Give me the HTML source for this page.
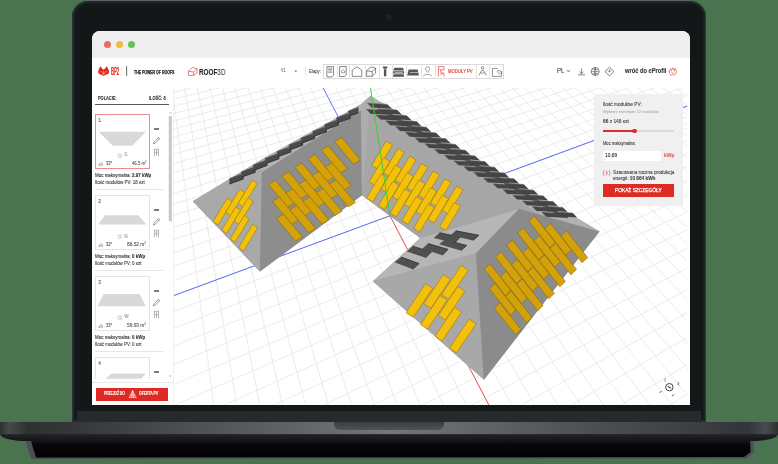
<!DOCTYPE html>
<html><head><meta charset="utf-8">
<style>
*{margin:0;padding:0;box-sizing:border-box}
html,body{width:778px;height:464px;overflow:hidden;background:#4a734f;font-family:"Liberation Sans",sans-serif}
.a{position:absolute}
#shadow{left:0;top:0;width:778px;height:464px}
#base{left:0;top:421.8px;width:778px;height:19.2px;border-radius:0 0 26px 26px/0 0 7px 7px;
 background:linear-gradient(to bottom,rgba(0,0,0,0) 0,rgba(0,0,0,0) 64%,#222326 66%,#141517 100%),
 linear-gradient(to right,#2e2f31 0,#48494c 1.2%,#2f3032 3.5%,#36373a 10%,#4f5053 25%,#626366 38%,#747679 50%,#626366 62%,#4f5053 75%,#3d3e41 90%,#333437 96%,#4a4b4e 98.5%,#2e2f31 100%)}
#notch{left:333.7px;top:421.8px;width:110.3px;height:8.6px;border-radius:0 0 6px 6px;background:linear-gradient(to bottom,#3a3c3f,#505256)}
#lid{left:71.6px;top:0.8px;width:634px;height:421px;border-radius:16px 16px 0 0;background:#131718;
 box-shadow:inset 0 0 0 1.2px #2f3439, inset 0 0 0 3px #1b1f22}
#chin{left:77px;top:410.7px;width:624px;height:11.1px;background:#262a2d}
#screen{left:92px;top:30.5px;width:598px;height:374.2px;border-radius:8px 8px 0 0;background:#fff;overflow:hidden}
#tbar{left:0;top:0;width:598px;height:27.5px;background:#efefef}
.dot{position:absolute;top:10.4px;width:7px;height:7px;border-radius:50%}
.t{position:absolute;white-space:nowrap;line-height:1}
</style></head><body>
<svg id="shadow" class="a" width="778" height="464" viewBox="0 0 778 464">
 <defs>
  <filter id="sb" x="-5%" y="-50%" width="110%" height="200%"><feGaussianBlur stdDeviation="0.6"/></filter>
  <linearGradient id="sg" x1="0" y1="0" x2="0" y2="1"><stop offset="0" stop-color="#1c1d21"/><stop offset="0.35" stop-color="#08080a"/><stop offset="1" stop-color="#000"/></linearGradient>
 </defs>
 <polygon points="25,440 753,440 754,452 747,458.5 31,459" fill="#4e4d5a" filter="url(#sb)"/>
 <polygon points="30,438 750,438 750.5,452 744,457 36,457.5" fill="url(#sg)"/>
</svg>
<div id="base" class="a"></div>
<div id="notch" class="a"></div>
<div id="lid" class="a"></div>
<div class="a" style="left:88px;top:0;width:602px;height:1px;background:#5e6068"></div>
<div id="chin" class="a"></div>
<div id="camdot" class="a" style="left:387px;top:15.4px;width:4px;height:4px;border-radius:50%;background:#1c2023;box-shadow:0 0 0 0.6px #262a2e"></div>
<div class="a" style="left:86px;top:1px;width:606px;height:3px;background:linear-gradient(#2a2f33,#141819)"></div>
<div id="screen" class="a">
  <div id="tbar" class="a">
    <div class="dot" style="left:11.8px;background:#ec6a5e"></div>
    <div class="dot" style="left:23.8px;background:#f2bb45"></div>
    <div class="dot" style="left:35.8px;background:#61c454"></div>
  </div>
</div>

<svg width="778" height="464" viewBox="0 0 778 464" style="position:absolute;left:0;top:0">
<defs><clipPath id="vp"><rect x="173.7" y="88" width="513.5" height="316.7"/></clipPath></defs>
<g clip-path="url(#vp)">
<rect x="173.7" y="88" width="516.3" height="316.7" fill="#fff"/>
<g stroke="#e6e6e6" stroke-width="0.8"><line x1="-89.9" y1="-28.6" x2="1573.0" y2="-2153.7"/><line x1="-461.5" y1="107.3" x2="635.4" y2="-90.6"/><line x1="-80.0" y1="-30.0" x2="1565.2" y2="-2224.2"/><line x1="-471.7" y1="114.4" x2="640.0" y2="-88.7"/><line x1="-70.2" y1="-31.4" x2="1556.8" y2="-2300.2"/><line x1="-482.3" y1="121.7" x2="644.6" y2="-86.8"/><line x1="-60.6" y1="-32.8" x2="1547.7" y2="-2382.5"/><line x1="-493.2" y1="129.4" x2="649.3" y2="-84.9"/><line x1="-51.0" y1="-34.2" x2="1537.8" y2="-2471.8"/><line x1="-504.6" y1="137.3" x2="654.2" y2="-83.0"/><line x1="-41.5" y1="-35.5" x2="1527.0" y2="-2569.1"/><line x1="-516.4" y1="145.5" x2="659.1" y2="-81.0"/><line x1="-32.1" y1="-36.9" x2="1515.3" y2="-2675.5"/><line x1="-528.6" y1="154.0" x2="664.1" y2="-79.0"/><line x1="-22.9" y1="-38.2" x2="1502.3" y2="-2792.4"/><line x1="-541.4" y1="162.9" x2="669.1" y2="-76.9"/><line x1="-13.7" y1="-39.5" x2="1488.1" y2="-2921.4"/><line x1="-554.6" y1="172.1" x2="674.3" y2="-74.8"/><line x1="-4.6" y1="-40.8" x2="1472.3" y2="-3064.4"/><line x1="-568.4" y1="181.7" x2="679.6" y2="-72.7"/><line x1="4.4" y1="-42.1" x2="1454.6" y2="-3223.9"/><line x1="-582.8" y1="191.7" x2="685.0" y2="-70.5"/><line x1="13.3" y1="-43.4" x2="1434.8" y2="-3402.9"/><line x1="-597.7" y1="202.1" x2="690.5" y2="-68.3"/><line x1="22.1" y1="-44.7" x2="1412.4" y2="-3605.2"/><line x1="-613.4" y1="213.0" x2="696.1" y2="-66.1"/><line x1="30.9" y1="-45.9" x2="1387.0" y2="-3835.8"/><line x1="-629.7" y1="224.4" x2="701.8" y2="-63.7"/><line x1="39.5" y1="-47.2" x2="1357.6" y2="-4100.8"/><line x1="-646.7" y1="236.2" x2="707.6" y2="-61.4"/><line x1="48.1" y1="-48.4" x2="1323.6" y2="-4408.8"/><line x1="-664.6" y1="248.7" x2="713.5" y2="-59.0"/><line x1="56.5" y1="-49.6" x2="1283.5" y2="-4771.0"/><line x1="-683.3" y1="261.7" x2="719.6" y2="-56.5"/><line x1="64.9" y1="-50.8" x2="1235.7" y2="-5203.3"/><line x1="-702.9" y1="275.3" x2="725.8" y2="-54.0"/><line x1="73.3" y1="-52.0" x2="1177.7" y2="-5727.9"/><line x1="-723.5" y1="289.7" x2="732.1" y2="-51.5"/><line x1="81.5" y1="-53.2" x2="1105.8" y2="-6378.2"/><line x1="-745.1" y1="304.7" x2="738.6" y2="-48.9"/><line x1="89.6" y1="-54.4" x2="1014.4" y2="-7205.4"/><line x1="-767.9" y1="320.6" x2="745.2" y2="-46.2"/><line x1="97.7" y1="-55.5" x2="894.1" y2="-8293.0"/><line x1="-791.9" y1="337.3" x2="751.9" y2="-43.5"/><line x1="105.7" y1="-56.7" x2="728.9" y2="-9787.0"/><line x1="-817.3" y1="355.0" x2="758.8" y2="-40.7"/><line x1="113.6" y1="-57.8" x2="487.8" y2="-11967.6"/><line x1="-844.1" y1="373.6" x2="765.8" y2="-37.9"/><line x1="121.5" y1="-58.9" x2="102.8" y2="-15449.3"/><line x1="-872.4" y1="393.4" x2="773.0" y2="-35.0"/><line x1="129.3" y1="-60.0" x2="-609.6" y2="-21891.4"/><line x1="-902.5" y1="414.3" x2="780.3" y2="-32.0"/><line x1="137.0" y1="-61.2" x2="-2375.7" y2="-37862.6"/><line x1="-934.5" y1="436.5" x2="787.8" y2="-29.0"/><line x1="144.6" y1="-62.2" x2="-14173.1" y2="-144551.1"/><line x1="-968.5" y1="460.2" x2="795.5" y2="-25.9"/><line x1="152.1" y1="-63.3" x2="10447.4" y2="78100.9"/><line x1="-1004.8" y1="485.5" x2="803.4" y2="-22.7"/><line x1="159.6" y1="-64.4" x2="5186.7" y2="30526.4"/><line x1="-1043.6" y1="512.5" x2="811.4" y2="-19.4"/><line x1="167.1" y1="-65.5" x2="3899.5" y2="18885.8"/><line x1="-1085.1" y1="541.4" x2="819.7" y2="-16.1"/><line x1="174.4" y1="-66.5" x2="3318.0" y2="13627.3"/><line x1="-1129.8" y1="572.5" x2="828.1" y2="-12.7"/><line x1="181.7" y1="-67.6" x2="2986.7" y2="10631.5"/><line x1="-1177.9" y1="606.0" x2="836.8" y2="-9.2"/><line x1="188.9" y1="-68.6" x2="2772.8" y2="8696.6"/><line x1="-1229.8" y1="642.1" x2="845.6" y2="-5.6"/><line x1="196.1" y1="-69.6" x2="2623.2" y2="7343.8"/><line x1="-1286.0" y1="681.3" x2="854.7" y2="-1.9"/><line x1="203.2" y1="-70.7" x2="2512.7" y2="6344.8"/><line x1="-1347.1" y1="723.8" x2="864.1" y2="1.8"/><line x1="210.2" y1="-71.7" x2="2427.8" y2="5576.8"/><line x1="-1413.8" y1="770.2" x2="873.6" y2="5.7"/><line x1="217.1" y1="-72.7" x2="2360.5" y2="4968.0"/><line x1="-1486.8" y1="821.0" x2="883.4" y2="9.6"/><line x1="224.1" y1="-73.7" x2="2305.8" y2="4473.6"/><line x1="-1567.1" y1="876.9" x2="893.5" y2="13.7"/><line x1="230.9" y1="-74.6" x2="2260.5" y2="4064.0"/><line x1="-1655.8" y1="938.7" x2="903.8" y2="17.9"/><line x1="237.7" y1="-75.6" x2="2222.4" y2="3719.2"/><line x1="-1754.4" y1="1007.3" x2="914.4" y2="22.2"/><line x1="244.4" y1="-76.6" x2="2189.8" y2="3425.0"/><line x1="-1864.6" y1="1084.0" x2="925.4" y2="26.6"/><line x1="251.1" y1="-77.5" x2="2161.7" y2="3170.9"/><line x1="-1988.5" y1="1170.3" x2="936.6" y2="31.1"/><line x1="257.7" y1="-78.5" x2="2137.2" y2="2949.3"/><line x1="-2128.9" y1="1268.0" x2="948.1" y2="35.8"/><line x1="264.2" y1="-79.4" x2="2115.7" y2="2754.3"/><line x1="-2289.3" y1="1379.7" x2="960.0" y2="40.6"/><line x1="270.7" y1="-80.3" x2="2096.6" y2="2581.4"/><line x1="-2474.4" y1="1508.5" x2="972.2" y2="45.5"/><line x1="277.2" y1="-81.3" x2="2079.5" y2="2427.1"/><line x1="-2690.2" y1="1658.8" x2="984.7" y2="50.6"/><line x1="283.5" y1="-82.2" x2="2064.2" y2="2288.5"/><line x1="-2945.2" y1="1836.3" x2="997.7" y2="55.8"/><line x1="289.9" y1="-83.1" x2="2050.3" y2="2163.3"/><line x1="-3251.1" y1="2049.2" x2="1011.0" y2="61.2"/><line x1="296.2" y1="-84.0" x2="2037.8" y2="2049.6"/><line x1="-3624.7" y1="2309.3" x2="1024.8" y2="66.8"/><line x1="302.4" y1="-84.9" x2="2026.3" y2="1946.0"/><line x1="-4091.4" y1="2634.3" x2="1038.9" y2="72.5"/><line x1="308.5" y1="-85.8" x2="2015.8" y2="1851.2"/><line x1="-4691.1" y1="3051.7" x2="1053.6" y2="78.4"/><line x1="314.7" y1="-86.7" x2="2006.2" y2="1764.1"/><line x1="-5489.7" y1="3607.7" x2="1068.7" y2="84.5"/><line x1="320.7" y1="-87.5" x2="1997.3" y2="1683.7"/><line x1="-6606.3" y1="4384.9" x2="1084.3" y2="90.8"/><line x1="326.8" y1="-88.4" x2="1989.1" y2="1609.4"/><line x1="-8277.5" y1="5548.4" x2="1100.4" y2="97.3"/><line x1="332.7" y1="-89.2" x2="1981.5" y2="1540.4"/><line x1="-11053.6" y1="7480.9" x2="1117.1" y2="104.1"/><line x1="338.6" y1="-90.1" x2="1974.4" y2="1476.3"/><line x1="-16571.0" y1="11321.9" x2="1134.4" y2="111.0"/><line x1="344.5" y1="-90.9" x2="1967.7" y2="1416.5"/><line x1="-32850.1" y1="22654.5" x2="1152.2" y2="118.3"/><line x1="350.3" y1="-91.8" x2="1961.6" y2="1360.6"/><line x1="-1332120.9" y1="927135.9" x2="1170.7" y2="125.7"/><line x1="356.1" y1="-92.6" x2="1955.8" y2="1308.2"/><line x1="34809.4" y1="-24446.4" x2="1189.9" y2="133.5"/><line x1="361.9" y1="-93.4" x2="1950.3" y2="1259.1"/><line x1="17242.4" y1="-12217.2" x2="1209.8" y2="141.5"/><line x1="367.5" y1="-94.2" x2="1945.2" y2="1212.9"/><line x1="11486.7" y1="-8210.4" x2="1230.5" y2="149.9"/><line x1="373.2" y1="-95.1" x2="1940.4" y2="1169.3"/><line x1="8627.1" y1="-6219.7" x2="1251.9" y2="158.5"/><line x1="378.8" y1="-95.9" x2="1935.9" y2="1128.2"/><line x1="6917.3" y1="-5029.4" x2="1274.2" y2="167.5"/><line x1="384.3" y1="-96.7" x2="1931.6" y2="1089.3"/><line x1="5779.8" y1="-4237.6" x2="1297.4" y2="176.9"/><line x1="389.8" y1="-97.4" x2="1927.5" y2="1052.5"/><line x1="4968.5" y1="-3672.8" x2="1321.5" y2="186.7"/><line x1="395.3" y1="-98.2" x2="1923.6" y2="1017.6"/><line x1="4360.6" y1="-3249.6" x2="1346.7" y2="196.8"/><line x1="400.7" y1="-99.0" x2="1920.0" y2="984.4"/><line x1="3888.3" y1="-2920.8" x2="1372.9" y2="207.4"/><line x1="406.1" y1="-99.8" x2="1916.5" y2="952.9"/><line x1="3510.6" y1="-2657.9" x2="1400.3" y2="218.5"/><line x1="411.4" y1="-100.5" x2="1913.2" y2="922.9"/><line x1="3201.7" y1="-2442.9" x2="1428.9" y2="230.1"/><line x1="416.7" y1="-101.3" x2="1910.0" y2="894.3"/><line x1="2944.5" y1="-2263.8" x2="1458.8" y2="242.2"/><line x1="422.0" y1="-102.1" x2="1907.0" y2="867.0"/><line x1="2726.9" y1="-2112.3" x2="1490.2" y2="254.8"/><line x1="427.2" y1="-102.8" x2="1904.1" y2="840.9"/><line x1="2540.4" y1="-1982.5" x2="1523.0" y2="268.1"/><line x1="432.4" y1="-103.5" x2="1901.3" y2="816.0"/><line x1="2378.9" y1="-1870.0" x2="1557.4" y2="282.0"/><line x1="437.5" y1="-104.3" x2="1898.7" y2="792.2"/><line x1="2237.5" y1="-1771.6" x2="1593.6" y2="296.6"/><line x1="442.6" y1="-105.0" x2="1896.2" y2="769.3"/><line x1="2112.9" y1="-1684.8" x2="1631.6" y2="312.0"/><line x1="447.7" y1="-105.7" x2="1893.8" y2="747.4"/><line x1="2002.1" y1="-1607.7" x2="1671.7" y2="328.1"/><line x1="452.7" y1="-106.5" x2="1891.4" y2="726.4"/><line x1="1902.9" y1="-1538.7" x2="1713.9" y2="345.2"/><line x1="457.7" y1="-107.2" x2="1889.2" y2="706.2"/><line x1="1813.7" y1="-1476.6" x2="1758.5" y2="363.2"/><line x1="462.6" y1="-107.9" x2="1887.1" y2="686.8"/><line x1="1733.0" y1="-1420.4" x2="1805.7" y2="382.3"/><line x1="467.5" y1="-108.6" x2="1885.0" y2="668.1"/><line x1="1659.7" y1="-1369.4" x2="1855.6" y2="402.5"/></g>
<line x1="-1754.4" y1="1007.3" x2="914.4" y2="22.2" stroke="#5a6cf0" stroke-width="1"/>
<line x1="264.8" y1="-23.7" x2="390" y2="216" stroke="#6f7ff5" stroke-width="1"/>
<line x1="390" y1="216" x2="898.3" y2="1187.6" stroke="#f03c3c" stroke-width="0.9"/>
<polygon points="192.8,201.3 262.5,159.0 361.0,104.5 370.4,96.0 599.5,231.4 483.9,379.7 372.9,281.2 420.3,238.1 390.0,216.0 362.0,195.3 259.9,271.6" fill="#9a9a9a" /><polygon points="192.8,201.3 262.5,159.0 259.9,271.6" fill="#a9a9a9" /><polygon points="261.8,172.0 361.0,110.5 362.0,195.3 259.9,271.6" fill="#8d8d8d" /><polygon points="262.5,159.0 361.0,104.0 361.0,110.5 261.8,172.0" fill="#b3b3b3" /><polygon points="361.0,104.0 370.4,96.0 372.0,120.0 362.0,195.3 361.0,110.5" fill="#adadad" /><polygon points="370.4,96.0 599.5,231.4 519.0,209.0 420.3,238.1 390.0,216.0 362.0,195.3" fill="#a6a6a6" /><polygon points="372.9,281.2 420.3,238.1 519.0,209.0 476.0,253.3" fill="#b6b6b6" /><polygon points="372.9,281.2 476.0,253.3 483.9,379.7" fill="#a8a8a8" /><polygon points="476.0,253.3 519.0,209.0 599.5,231.4 483.9,379.7" fill="#8b8b8b" /><polygon points="370.4,96.0 599.5,231.4 540.0,214.5 371.0,104.0" fill="#b2b2b2" /><polygon points="519.0,209.0 599.5,231.4 540.0,214.5" fill="#9c9c9c" /><polygon points="229.5,178.4 243.7,173.2 243.7,178.8 229.5,184.0" fill="#4a4a4a" /><polyline points="229.5,184.0 229.5,178.4 243.7,173.2" fill="none" stroke="#5f5f5f" stroke-width="0.6"/><polyline points="243.7,178.8 229.5,184.0" fill="none" stroke="#2c2c2c" stroke-width="0.9"/><polygon points="241.4,171.7 255.6,166.5 255.6,172.1 241.4,177.2" fill="#4a4a4a" /><polyline points="241.4,177.2 241.4,171.7 255.6,166.5" fill="none" stroke="#5f5f5f" stroke-width="0.6"/><polyline points="255.6,172.1 241.4,177.2" fill="none" stroke="#2c2c2c" stroke-width="0.9"/><polygon points="253.3,164.9 267.5,159.7 267.5,165.3 253.3,170.5" fill="#4a4a4a" /><polyline points="253.3,170.5 253.3,164.9 267.5,159.7" fill="none" stroke="#5f5f5f" stroke-width="0.6"/><polyline points="267.5,165.3 253.3,170.5" fill="none" stroke="#2c2c2c" stroke-width="0.9"/><polygon points="265.2,158.2 279.4,153.0 279.4,158.6 265.2,163.8" fill="#4a4a4a" /><polyline points="265.2,163.8 265.2,158.2 279.4,153.0" fill="none" stroke="#5f5f5f" stroke-width="0.6"/><polyline points="279.4,158.6 265.2,163.8" fill="none" stroke="#2c2c2c" stroke-width="0.9"/><polygon points="277.1,151.4 291.3,146.2 291.3,151.8 277.1,157.0" fill="#4a4a4a" /><polyline points="277.1,157.0 277.1,151.4 291.3,146.2" fill="none" stroke="#5f5f5f" stroke-width="0.6"/><polyline points="291.3,151.8 277.1,157.0" fill="none" stroke="#2c2c2c" stroke-width="0.9"/><polygon points="289.0,144.7 303.2,139.5 303.2,145.1 289.0,150.2" fill="#4a4a4a" /><polyline points="289.0,150.2 289.0,144.7 303.2,139.5" fill="none" stroke="#5f5f5f" stroke-width="0.6"/><polyline points="303.2,145.1 289.0,150.2" fill="none" stroke="#2c2c2c" stroke-width="0.9"/><polygon points="300.9,137.9 315.1,132.7 315.1,138.3 300.9,143.5" fill="#4a4a4a" /><polyline points="300.9,143.5 300.9,137.9 315.1,132.7" fill="none" stroke="#5f5f5f" stroke-width="0.6"/><polyline points="315.1,138.3 300.9,143.5" fill="none" stroke="#2c2c2c" stroke-width="0.9"/><polygon points="312.8,131.2 327.0,126.0 327.0,131.6 312.8,136.8" fill="#4a4a4a" /><polyline points="312.8,136.8 312.8,131.2 327.0,126.0" fill="none" stroke="#5f5f5f" stroke-width="0.6"/><polyline points="327.0,131.6 312.8,136.8" fill="none" stroke="#2c2c2c" stroke-width="0.9"/><polygon points="324.7,124.4 338.9,119.2 338.9,124.8 324.7,130.0" fill="#4a4a4a" /><polyline points="324.7,130.0 324.7,124.4 338.9,119.2" fill="none" stroke="#5f5f5f" stroke-width="0.6"/><polyline points="338.9,124.8 324.7,130.0" fill="none" stroke="#2c2c2c" stroke-width="0.9"/><polygon points="336.6,117.7 350.8,112.5 350.8,118.1 336.6,123.2" fill="#4a4a4a" /><polyline points="336.6,123.2 336.6,117.7 350.8,112.5" fill="none" stroke="#5f5f5f" stroke-width="0.6"/><polyline points="350.8,118.1 336.6,123.2" fill="none" stroke="#2c2c2c" stroke-width="0.9"/><polygon points="348.5,110.9 358.5,107.2 358.5,112.8 348.5,116.5" fill="#4a4a4a" /><polyline points="348.5,116.5 348.5,110.9 358.5,107.2" fill="none" stroke="#5f5f5f" stroke-width="0.6"/><polyline points="358.5,112.8 348.5,116.5" fill="none" stroke="#2c2c2c" stroke-width="0.9"/><polygon points="367.5,103.2 387.5,104.4 392.0,108.8 372.0,107.6" fill="#444444" /><polyline points="372.0,107.6 367.5,103.2 387.5,104.4" fill="none" stroke="#5a5a5a" stroke-width="0.6"/><polygon points="366.5,109.4 388.5,110.6 393.0,115.0 371.0,113.8" fill="#444444" /><polyline points="371.0,113.8 366.5,109.4 388.5,110.6" fill="none" stroke="#5a5a5a" stroke-width="0.6"/><polygon points="377.2,108.9 397.2,110.1 401.8,114.5 381.8,113.3" fill="#444444" /><polyline points="381.8,113.3 377.2,108.9 397.2,110.1" fill="none" stroke="#5a5a5a" stroke-width="0.6"/><polygon points="376.2,115.1 398.2,116.3 402.8,120.7 380.8,119.5" fill="#444444" /><polyline points="380.8,119.5 376.2,115.1 398.2,116.3" fill="none" stroke="#5a5a5a" stroke-width="0.6"/><polygon points="387.0,114.6 407.0,115.8 411.5,120.2 391.5,119.0" fill="#444444" /><polyline points="391.5,119.0 387.0,114.6 407.0,115.8" fill="none" stroke="#5a5a5a" stroke-width="0.6"/><polygon points="386.0,120.8 408.0,122.0 412.5,126.4 390.5,125.2" fill="#444444" /><polyline points="390.5,125.2 386.0,120.8 408.0,122.0" fill="none" stroke="#5a5a5a" stroke-width="0.6"/><polygon points="396.8,120.4 416.8,121.6 421.2,126.0 401.2,124.8" fill="#444444" /><polyline points="401.2,124.8 396.8,120.4 416.8,121.6" fill="none" stroke="#5a5a5a" stroke-width="0.6"/><polygon points="395.8,126.6 417.8,127.8 422.2,132.2 400.2,131.0" fill="#444444" /><polyline points="400.2,131.0 395.8,126.6 417.8,127.8" fill="none" stroke="#5a5a5a" stroke-width="0.6"/><polygon points="406.5,126.1 426.5,127.3 431.0,131.7 411.0,130.5" fill="#444444" /><polyline points="411.0,130.5 406.5,126.1 426.5,127.3" fill="none" stroke="#5a5a5a" stroke-width="0.6"/><polygon points="405.5,132.3 427.5,133.5 432.0,137.9 410.0,136.7" fill="#444444" /><polyline points="410.0,136.7 405.5,132.3 427.5,133.5" fill="none" stroke="#5a5a5a" stroke-width="0.6"/><polygon points="416.2,131.8 436.2,133.0 440.8,137.4 420.8,136.2" fill="#444444" /><polyline points="420.8,136.2 416.2,131.8 436.2,133.0" fill="none" stroke="#5a5a5a" stroke-width="0.6"/><polygon points="415.2,138.0 437.2,139.2 441.8,143.6 419.8,142.4" fill="#444444" /><polyline points="419.8,142.4 415.2,138.0 437.2,139.2" fill="none" stroke="#5a5a5a" stroke-width="0.6"/><polygon points="426.0,137.5 446.0,138.7 450.5,143.1 430.5,141.9" fill="#444444" /><polyline points="430.5,141.9 426.0,137.5 446.0,138.7" fill="none" stroke="#5a5a5a" stroke-width="0.6"/><polygon points="425.0,143.7 447.0,144.9 451.5,149.3 429.5,148.1" fill="#444444" /><polyline points="429.5,148.1 425.0,143.7 447.0,144.9" fill="none" stroke="#5a5a5a" stroke-width="0.6"/><polygon points="435.8,143.2 455.8,144.4 460.2,148.8 440.2,147.6" fill="#444444" /><polyline points="440.2,147.6 435.8,143.2 455.8,144.4" fill="none" stroke="#5a5a5a" stroke-width="0.6"/><polygon points="434.8,149.4 456.8,150.6 461.2,155.0 439.2,153.8" fill="#444444" /><polyline points="439.2,153.8 434.8,149.4 456.8,150.6" fill="none" stroke="#5a5a5a" stroke-width="0.6"/><polygon points="445.5,149.0 465.5,150.2 470.0,154.6 450.0,153.4" fill="#444444" /><polyline points="450.0,153.4 445.5,149.0 465.5,150.2" fill="none" stroke="#5a5a5a" stroke-width="0.6"/><polygon points="444.5,155.2 466.5,156.4 471.0,160.8 449.0,159.6" fill="#444444" /><polyline points="449.0,159.6 444.5,155.2 466.5,156.4" fill="none" stroke="#5a5a5a" stroke-width="0.6"/><polygon points="455.2,154.7 475.2,155.9 479.8,160.3 459.8,159.1" fill="#444444" /><polyline points="459.8,159.1 455.2,154.7 475.2,155.9" fill="none" stroke="#5a5a5a" stroke-width="0.6"/><polygon points="454.2,160.9 476.2,162.1 480.8,166.5 458.8,165.3" fill="#444444" /><polyline points="458.8,165.3 454.2,160.9 476.2,162.1" fill="none" stroke="#5a5a5a" stroke-width="0.6"/><polygon points="465.0,160.4 485.0,161.6 489.5,166.0 469.5,164.8" fill="#444444" /><polyline points="469.5,164.8 465.0,160.4 485.0,161.6" fill="none" stroke="#5a5a5a" stroke-width="0.6"/><polygon points="464.0,166.6 486.0,167.8 490.5,172.2 468.5,171.0" fill="#444444" /><polyline points="468.5,171.0 464.0,166.6 486.0,167.8" fill="none" stroke="#5a5a5a" stroke-width="0.6"/><polygon points="474.8,166.1 494.8,167.3 499.2,171.7 479.2,170.5" fill="#444444" /><polyline points="479.2,170.5 474.8,166.1 494.8,167.3" fill="none" stroke="#5a5a5a" stroke-width="0.6"/><polygon points="473.8,172.3 495.8,173.5 500.2,177.9 478.2,176.7" fill="#444444" /><polyline points="478.2,176.7 473.8,172.3 495.8,173.5" fill="none" stroke="#5a5a5a" stroke-width="0.6"/><polygon points="484.5,171.8 504.5,173.0 509.0,177.4 489.0,176.2" fill="#444444" /><polyline points="489.0,176.2 484.5,171.8 504.5,173.0" fill="none" stroke="#5a5a5a" stroke-width="0.6"/><polygon points="483.5,178.0 505.5,179.2 510.0,183.6 488.0,182.4" fill="#444444" /><polyline points="488.0,182.4 483.5,178.0 505.5,179.2" fill="none" stroke="#5a5a5a" stroke-width="0.6"/><polygon points="494.2,177.6 514.2,178.8 518.8,183.2 498.8,182.0" fill="#444444" /><polyline points="498.8,182.0 494.2,177.6 514.2,178.8" fill="none" stroke="#5a5a5a" stroke-width="0.6"/><polygon points="493.2,183.8 515.2,185.0 519.8,189.4 497.8,188.2" fill="#444444" /><polyline points="497.8,188.2 493.2,183.8 515.2,185.0" fill="none" stroke="#5a5a5a" stroke-width="0.6"/><polygon points="504.0,183.3 524.0,184.5 528.5,188.9 508.5,187.7" fill="#444444" /><polyline points="508.5,187.7 504.0,183.3 524.0,184.5" fill="none" stroke="#5a5a5a" stroke-width="0.6"/><polygon points="503.0,189.5 525.0,190.7 529.5,195.1 507.5,193.9" fill="#444444" /><polyline points="507.5,193.9 503.0,189.5 525.0,190.7" fill="none" stroke="#5a5a5a" stroke-width="0.6"/><polygon points="513.8,189.0 533.8,190.2 538.2,194.6 518.2,193.4" fill="#444444" /><polyline points="518.2,193.4 513.8,189.0 533.8,190.2" fill="none" stroke="#5a5a5a" stroke-width="0.6"/><polygon points="512.8,195.2 534.8,196.4 539.2,200.8 517.2,199.6" fill="#444444" /><polyline points="517.2,199.6 512.8,195.2 534.8,196.4" fill="none" stroke="#5a5a5a" stroke-width="0.6"/><polygon points="523.5,194.7 543.5,195.9 548.0,200.3 528.0,199.1" fill="#444444" /><polyline points="528.0,199.1 523.5,194.7 543.5,195.9" fill="none" stroke="#5a5a5a" stroke-width="0.6"/><polygon points="522.5,200.9 544.5,202.1 549.0,206.5 527.0,205.3" fill="#444444" /><polyline points="527.0,205.3 522.5,200.9 544.5,202.1" fill="none" stroke="#5a5a5a" stroke-width="0.6"/><polygon points="533.2,200.4 553.2,201.6 557.8,206.0 537.8,204.8" fill="#444444" /><polyline points="537.8,204.8 533.2,200.4 553.2,201.6" fill="none" stroke="#5a5a5a" stroke-width="0.6"/><polygon points="532.2,206.6 554.2,207.8 558.8,212.2 536.8,211.0" fill="#444444" /><polyline points="536.8,211.0 532.2,206.6 554.2,207.8" fill="none" stroke="#5a5a5a" stroke-width="0.6"/><polygon points="543.0,206.2 563.0,207.4 567.5,211.8 547.5,210.6" fill="#444444" /><polyline points="547.5,210.6 543.0,206.2 563.0,207.4" fill="none" stroke="#5a5a5a" stroke-width="0.6"/><polygon points="542.0,212.4 564.0,213.6 568.5,218.0 546.5,216.8" fill="#444444" /><polyline points="546.5,216.8 542.0,212.4 564.0,213.6" fill="none" stroke="#5a5a5a" stroke-width="0.6"/><polygon points="552.8,211.9 572.8,213.1 577.2,217.5 557.2,216.3" fill="#444444" /><polyline points="557.2,216.3 552.8,211.9 572.8,213.1" fill="none" stroke="#5a5a5a" stroke-width="0.6"/><polygon points="394.6,262.3 401.1,257.1 419.1,263.6 412.6,269.3" fill="#505050" /><polyline points="401.1,257.1 419.1,263.6 412.6,269.3" fill="none" stroke="#333333" stroke-width="0.9"/><polygon points="406.9,251.4 412.6,246.2 431.3,252.0 425.5,257.8" fill="#505050" /><polyline points="412.6,246.2 431.3,252.0 425.5,257.8" fill="none" stroke="#333333" stroke-width="0.9"/><polygon points="422.3,248.8 428.1,243.6 448.0,249.4 442.2,255.2" fill="#505050" /><polyline points="428.1,243.6 448.0,249.4 442.2,255.2" fill="none" stroke="#333333" stroke-width="0.9"/><polygon points="439.0,244.3 444.8,239.7 466.6,245.5 460.8,250.6" fill="#505050" /><polyline points="444.8,239.7 466.6,245.5 460.8,250.6" fill="none" stroke="#333333" stroke-width="0.9"/><polygon points="433.8,237.9 439.6,232.7 460.2,237.2 454.4,243.0" fill="#505050" /><polyline points="439.6,232.7 460.2,237.2 454.4,243.0" fill="none" stroke="#333333" stroke-width="0.9"/><polygon points="450.6,235.3 455.7,230.8 478.8,235.3 473.0,240.4" fill="#505050" /><polyline points="455.7,230.8 478.8,235.3 473.0,240.4" fill="none" stroke="#333333" stroke-width="0.9"/>
<polygon points="268.5,184.5 275.5,180.2 294.5,203.0 287.5,207.3" fill="#d3a10a" stroke="#8a6a08" stroke-width="0.6"/><polygon points="281.7,175.9 288.7,171.6 307.7,194.4 300.7,198.7" fill="#d3a10a" stroke="#8a6a08" stroke-width="0.6"/><polygon points="294.9,167.3 301.9,163.0 320.9,185.8 313.9,190.1" fill="#d3a10a" stroke="#8a6a08" stroke-width="0.6"/><polygon points="308.1,158.7 315.1,154.4 334.1,177.2 327.1,181.5" fill="#d3a10a" stroke="#8a6a08" stroke-width="0.6"/><polygon points="321.3,150.1 328.3,145.8 347.3,168.6 340.3,172.9" fill="#d3a10a" stroke="#8a6a08" stroke-width="0.6"/><polygon points="334.5,141.5 341.5,137.2 360.5,160.0 353.5,164.3" fill="#d3a10a" stroke="#8a6a08" stroke-width="0.6"/><polygon points="272.5,201.5 279.5,197.2 298.5,220.0 291.5,224.3" fill="#d3a10a" stroke="#8a6a08" stroke-width="0.6"/><polygon points="285.7,192.9 292.7,188.6 311.7,211.4 304.7,215.7" fill="#d3a10a" stroke="#8a6a08" stroke-width="0.6"/><polygon points="298.9,184.3 305.9,180.0 324.9,202.8 317.9,207.1" fill="#d3a10a" stroke="#8a6a08" stroke-width="0.6"/><polygon points="312.1,175.7 319.1,171.4 338.1,194.2 331.1,198.5" fill="#d3a10a" stroke="#8a6a08" stroke-width="0.6"/><polygon points="325.3,167.1 332.3,162.8 351.3,185.6 344.3,189.9" fill="#d3a10a" stroke="#8a6a08" stroke-width="0.6"/><polygon points="276.5,218.5 283.5,214.2 302.5,237.0 295.5,241.3" fill="#d3a10a" stroke="#8a6a08" stroke-width="0.6"/><polygon points="289.7,209.9 296.7,205.6 315.7,228.4 308.7,232.7" fill="#d3a10a" stroke="#8a6a08" stroke-width="0.6"/><polygon points="302.9,201.3 309.9,197.0 328.9,219.8 321.9,224.1" fill="#d3a10a" stroke="#8a6a08" stroke-width="0.6"/><polygon points="316.1,192.7 323.1,188.4 342.1,211.2 335.1,215.5" fill="#d3a10a" stroke="#8a6a08" stroke-width="0.6"/><polygon points="329.3,184.1 336.3,179.8 355.3,202.6 348.3,206.9" fill="#d3a10a" stroke="#8a6a08" stroke-width="0.6"/><polygon points="227.2,198.1 232.1,201.6 218.1,224.9 213.2,221.4" fill="#f3c10c" stroke="#9a7a06" stroke-width="0.6"/><polygon points="239.7,189.1 244.6,192.6 230.6,215.9 225.7,212.4" fill="#f3c10c" stroke="#9a7a06" stroke-width="0.6"/><polygon points="252.2,180.1 257.1,183.6 243.1,206.9 238.2,203.4" fill="#f3c10c" stroke="#9a7a06" stroke-width="0.6"/><polygon points="235.7,206.8 240.6,210.3 226.6,233.6 221.7,230.1" fill="#f3c10c" stroke="#9a7a06" stroke-width="0.6"/><polygon points="248.2,197.8 253.1,201.3 239.1,224.6 234.2,221.1" fill="#f3c10c" stroke="#9a7a06" stroke-width="0.6"/><polygon points="244.2,215.5 249.1,219.0 235.1,242.3 230.2,238.8" fill="#f3c10c" stroke="#9a7a06" stroke-width="0.6"/><polygon points="252.7,224.2 257.6,227.7 243.6,251.0 238.7,247.5" fill="#f3c10c" stroke="#9a7a06" stroke-width="0.6"/><polygon points="386.1,141.2 392.5,144.8 378.1,169.0 371.7,165.4" fill="#f3c10c" stroke="#9a7a06" stroke-width="0.6"/><polygon points="397.9,148.7 404.2,152.3 389.8,176.5 383.5,172.9" fill="#f3c10c" stroke="#9a7a06" stroke-width="0.6"/><polygon points="409.6,156.2 416.0,159.8 401.6,184.0 395.2,180.4" fill="#f3c10c" stroke="#9a7a06" stroke-width="0.6"/><polygon points="421.4,163.7 427.7,167.3 413.3,191.5 407.0,187.9" fill="#f3c10c" stroke="#9a7a06" stroke-width="0.6"/><polygon points="433.1,171.2 439.5,174.8 425.1,199.0 418.7,195.4" fill="#f3c10c" stroke="#9a7a06" stroke-width="0.6"/><polygon points="444.9,178.7 451.2,182.3 436.8,206.5 430.5,202.9" fill="#f3c10c" stroke="#9a7a06" stroke-width="0.6"/><polygon points="456.6,186.2 463.0,189.8 448.6,214.0 442.2,210.4" fill="#f3c10c" stroke="#9a7a06" stroke-width="0.6"/><polygon points="383.5,157.6 389.9,161.2 375.5,185.4 369.1,181.8" fill="#f3c10c" stroke="#9a7a06" stroke-width="0.6"/><polygon points="395.2,165.1 401.6,168.7 387.2,192.9 380.9,189.3" fill="#f3c10c" stroke="#9a7a06" stroke-width="0.6"/><polygon points="407.0,172.6 413.4,176.2 399.0,200.4 392.6,196.8" fill="#f3c10c" stroke="#9a7a06" stroke-width="0.6"/><polygon points="418.8,180.1 425.1,183.7 410.7,207.9 404.4,204.3" fill="#f3c10c" stroke="#9a7a06" stroke-width="0.6"/><polygon points="430.5,187.6 436.9,191.2 422.5,215.4 416.1,211.8" fill="#f3c10c" stroke="#9a7a06" stroke-width="0.6"/><polygon points="442.2,195.1 448.6,198.7 434.2,222.9 427.9,219.3" fill="#f3c10c" stroke="#9a7a06" stroke-width="0.6"/><polygon points="454.0,202.6 460.4,206.2 446.0,230.4 439.6,226.8" fill="#f3c10c" stroke="#9a7a06" stroke-width="0.6"/><polygon points="380.9,174.0 387.3,177.6 372.9,201.8 366.5,198.2" fill="#f3c10c" stroke="#9a7a06" stroke-width="0.6"/><polygon points="392.7,181.5 399.0,185.1 384.6,209.3 378.3,205.7" fill="#f3c10c" stroke="#9a7a06" stroke-width="0.6"/><polygon points="404.4,189.0 410.8,192.6 396.4,216.8 390.0,213.2" fill="#f3c10c" stroke="#9a7a06" stroke-width="0.6"/><polygon points="416.2,196.5 422.5,200.1 408.1,224.3 401.8,220.7" fill="#f3c10c" stroke="#9a7a06" stroke-width="0.6"/><polygon points="427.9,204.0 434.3,207.6 419.9,231.8 413.5,228.2" fill="#f3c10c" stroke="#9a7a06" stroke-width="0.6"/><polygon points="425.5,283.7 432.6,288.4 413.1,317.4 406.0,312.7" fill="#f3c10c" stroke="#9a7a06" stroke-width="0.6"/><polygon points="443.3,274.6 450.4,279.3 430.9,308.3 423.8,303.6" fill="#f3c10c" stroke="#9a7a06" stroke-width="0.6"/><polygon points="461.1,265.5 468.2,270.2 448.8,299.2 441.6,294.5" fill="#f3c10c" stroke="#9a7a06" stroke-width="0.6"/><polygon points="440.0,295.5 447.1,300.2 427.6,329.2 420.5,324.5" fill="#f3c10c" stroke="#9a7a06" stroke-width="0.6"/><polygon points="457.8,286.4 464.9,291.1 445.4,320.1 438.3,315.4" fill="#f3c10c" stroke="#9a7a06" stroke-width="0.6"/><polygon points="454.5,307.3 461.6,312.0 442.1,341.0 435.0,336.3" fill="#f3c10c" stroke="#9a7a06" stroke-width="0.6"/><polygon points="469.0,319.1 476.1,323.8 456.6,352.8 449.5,348.1" fill="#f3c10c" stroke="#9a7a06" stroke-width="0.6"/><polygon points="484.4,269.2 490.0,263.9 511.0,290.4 505.4,295.7" fill="#d3a10a" stroke="#8a6a08" stroke-width="0.6"/><polygon points="495.5,257.2 501.1,251.9 522.1,278.4 516.5,283.7" fill="#d3a10a" stroke="#8a6a08" stroke-width="0.6"/><polygon points="506.6,245.2 512.2,239.9 533.2,266.4 527.6,271.7" fill="#d3a10a" stroke="#8a6a08" stroke-width="0.6"/><polygon points="517.7,233.2 523.3,227.9 544.3,254.4 538.7,259.7" fill="#d3a10a" stroke="#8a6a08" stroke-width="0.6"/><polygon points="528.8,221.2 534.4,215.9 555.4,242.4 549.8,247.7" fill="#d3a10a" stroke="#8a6a08" stroke-width="0.6"/><polygon points="489.4,288.7 495.0,283.4 516.0,309.9 510.4,315.2" fill="#d3a10a" stroke="#8a6a08" stroke-width="0.6"/><polygon points="500.5,276.7 506.1,271.4 527.1,297.9 521.5,303.2" fill="#d3a10a" stroke="#8a6a08" stroke-width="0.6"/><polygon points="511.6,264.7 517.2,259.4 538.2,285.9 532.6,291.2" fill="#d3a10a" stroke="#8a6a08" stroke-width="0.6"/><polygon points="522.7,252.7 528.3,247.4 549.3,273.9 543.7,279.2" fill="#d3a10a" stroke="#8a6a08" stroke-width="0.6"/><polygon points="533.8,240.7 539.4,235.4 560.4,261.9 554.8,267.2" fill="#d3a10a" stroke="#8a6a08" stroke-width="0.6"/><polygon points="544.9,228.7 550.5,223.4 571.5,249.9 565.9,255.2" fill="#d3a10a" stroke="#8a6a08" stroke-width="0.6"/><polygon points="494.4,308.2 500.0,302.9 521.0,329.4 515.4,334.7" fill="#d3a10a" stroke="#8a6a08" stroke-width="0.6"/><polygon points="505.5,296.2 511.1,290.9 532.1,317.4 526.5,322.7" fill="#d3a10a" stroke="#8a6a08" stroke-width="0.6"/><polygon points="516.6,284.2 522.2,278.9 543.2,305.4 537.6,310.7" fill="#d3a10a" stroke="#8a6a08" stroke-width="0.6"/><polygon points="527.7,272.2 533.3,266.9 554.3,293.4 548.7,298.7" fill="#d3a10a" stroke="#8a6a08" stroke-width="0.6"/><polygon points="538.8,260.2 544.4,254.9 565.4,281.4 559.8,286.7" fill="#d3a10a" stroke="#8a6a08" stroke-width="0.6"/><polygon points="549.9,248.2 555.5,242.9 576.5,269.4 570.9,274.7" fill="#d3a10a" stroke="#8a6a08" stroke-width="0.6"/><polygon points="561.0,236.2 566.6,230.9 587.6,257.4 582.0,262.7" fill="#d3a10a" stroke="#8a6a08" stroke-width="0.6"/>
<line x1="370.5" y1="88" x2="390" y2="216" stroke="#35d235" stroke-width="1"/>
</g>
</svg>

<div id="ui" class="a" style="left:0;top:0;width:778px;height:464px">
<svg class="a" style="left:0;top:0" width="778" height="464" viewBox="0 0 778 464">
 <path d="M100.3 66.3 L102.5 68.9 L103.6 69.8 L104.7 68.9 L106.9 66.3 L108.3 69.3 Q109.8 71.6 108.7 73.5 L105.3 75.1 L103.6 76 L101.9 75.1 L98.5 73.5 Q97.4 71.6 98.9 69.3 Z" fill="#e2231a"/>
 <path d="M100.6 70.6 L103.6 74.6 L106.6 70.6 M103.6 71 v3" fill="none" stroke="#fff" stroke-width="0.45"/>
 <rect x="126.2" y="66.2" width="0.9" height="9.6" fill="#555"/>
 <path d="M188.4 71.2 L192.6 67.4 L197 68.6 L197 73 L193.6 75.4 L188.4 75.4 Z M188.4 71.2 L193.6 72 L197 68.6 M193.6 72 L193.6 75.4" fill="none" stroke="#e5564e" stroke-width="0.75"/>
 <path d="M294.6 70.4 h2.4 l-1.2 2z" fill="#e53935"/>
 <rect x="305.2" y="66.2" width="0.8" height="10.4" fill="#dedede"/>
</svg>
<div class="t" style="left:110.70px;top:66.10px;font-size:10.76px;font-weight:bold;color:#e2231a;transform:scaleX(0.392);transform-origin:0 0;-webkit-text-stroke:0.12px #e2231a;">BP2</div>
<div class="t" style="left:133.60px;top:69.72px;font-size:5.52px;font-weight:bold;color:#1a1a1a;transform:scaleX(0.633);transform-origin:0 0;-webkit-text-stroke:0.25px #1a1a1a;">THE POWER OF ROOFS</div>
<div class="t" style="left:198.80px;top:66.90px;font-size:9.45px;font-weight:bold;color:#2a2a2a;transform:scaleX(0.673);transform-origin:0 0;-webkit-text-stroke:0.12px #2a2a2a;"><b>ROOF</b><span style="font-weight:normal;color:#555">3D</span></div>
<div class="t" style="left:280.80px;top:68.82px;font-size:4.94px;font-weight:normal;color:#7a6f6f;transform:scaleX(0.744);transform-origin:0 0;-webkit-text-stroke:0.12px #7a6f6f;">V1</div>
<div class="t" style="left:308.70px;top:68.52px;font-size:5.52px;font-weight:normal;color:#555;transform:scaleX(0.760);transform-origin:0 0;-webkit-text-stroke:0.12px #555;">Etapy:</div>
<div class="a" style="left:323.20px;top:63.60px;width:181.30px;height:15.40px;background:#fff;border:0.8px solid #dadada;box-sizing:border-box"></div>
<div class="a" style="left:336.70px;top:63.60px;width:0.80px;height:15.40px;background:#e2e2e2;"></div>
<div class="a" style="left:349.30px;top:63.60px;width:0.80px;height:15.40px;background:#e2e2e2;"></div>
<div class="a" style="left:364.90px;top:63.60px;width:0.80px;height:15.40px;background:#e2e2e2;"></div>
<div class="a" style="left:378.60px;top:63.60px;width:0.80px;height:15.40px;background:#e2e2e2;"></div>
<div class="a" style="left:391.90px;top:63.60px;width:0.80px;height:15.40px;background:#e2e2e2;"></div>
<div class="a" style="left:405.60px;top:63.60px;width:0.80px;height:15.40px;background:#e2e2e2;"></div>
<div class="a" style="left:420.70px;top:63.60px;width:0.80px;height:15.40px;background:#e2e2e2;"></div>
<div class="a" style="left:434.60px;top:63.60px;width:0.80px;height:15.40px;background:#e2e2e2;"></div>
<div class="a" style="left:475.50px;top:63.60px;width:0.80px;height:15.40px;background:#e2e2e2;"></div>
<div class="a" style="left:489.40px;top:63.60px;width:0.80px;height:15.40px;background:#e2e2e2;"></div>
<svg class="a" style="left:0;top:0" width="778" height="464" viewBox="0 0 778 464">
 <g fill="none" stroke="#555" stroke-width="0.7">
  <path d="M326.9 66.6 h6.6 v8.8 l-1.5 1.5 h-5.1z"/>
  <path d="M328.2 68.2 h4 M328.2 69.6 h4 M328.2 71 h4 M328.2 72.4 h4" stroke-width="0.55"/>
  <path d="M339.6 66.6 h6.6 v8.4 l-1.5 1.5 h-5.1z"/>
  <path d="M341.5 71 l1.6 -1.4 l1.6 1.4 v1.8 h-3.2z" stroke-width="0.55"/>
  <path d="M352.2 70.2 l4.8 -3.5 l4.8 3.5 v6.2 h-9.6z"/>
  <path d="M366.6 70.8 l4.2 -3.9 l4.8 1.2 v4.9 l-3.4 3.3 h-5.6z M366.6 70.8 l5.6 0.8 l3.4 -3.4 M372.2 71.6 v4.7"/>
 </g>
 <g fill="#555">
  <path d="M382.6 66.6 h5 l-0.8 2.2 h-3.4z M383.9 69.2 h2.4 v6.4 l-1.2 1.4 l-1.2 -1.4z"/>
  <path d="M394.4 67.8 h8.4 l1.3 2.8 h-11z M393.1 71.2 h11 v2.4 h-11z M393.6 74.2 h10 l0.6 2.6 h-11.2z"/>
  <path d="M408.6 69.4 h9 l1.4 6 h-11.8z"/>
 </g>
 <g fill="#fff"><path d="M394.6 72.1 h8 v0.5 h-8z M410 72.3 h8.2 v0.5 h-8.2z"/></g>
 <g fill="none" stroke="#666" stroke-width="0.6">
  <path d="M427.6 66.8 a2 2 0 0 1 2 2 c0 1.6 -2 3.6 -2 3.6 c0 0 -2 -2 -2 -3.6 a2 2 0 0 1 2 -2z"/>
  <path d="M423.2 76.2 l2.4 -1.8 h4 l2.4 1.8"/>
 </g>
 <g fill="none" stroke="#e53935" stroke-width="0.65">
  <path d="M438.4 66.2 v10.6 M438.4 66.6 h5.6 v3.4 h-3.2 v3.2 h3.2 v3.4 M439.4 69 l2.2 1.6 M443 72.6 l-2.2 2.6"/>
 </g>
 <g fill="none" stroke="#555" stroke-width="0.65">
  <circle cx="482.6" cy="67.8" r="1.2"/>
  <path d="M479 75.4 l2.8 -5 h1.8 l2.8 5 M480.6 72.6 l2 0.8 l2 -0.8"/>
  <path d="M492.4 68.4 h5.2 M492.4 68.4 v8 h9.2 v-5.4 M497.2 71.8 l1.6 -1.8 l2.4 2.4 l-1.6 1.8z"/>
 </g>
 <path d="M566.8 70.2 l1.6 1.6 l1.6 -1.6" fill="none" stroke="#444" stroke-width="0.8"/>
 <g fill="none" stroke="#555" stroke-width="0.7">
  <path d="M581.5 68.3 v5.2 M579.4 71.6 l2.1 2.1 l2.1 -2.1 M578 74.8 h7.1"/>
  <circle cx="595.2" cy="71.5" r="4"/>
  <path d="M591.2 71.5 h8 M595.2 67.5 v8 M592.2 69 q3 1.4 6 0 M592.2 74 q3 -1.4 6 0 M595.2 67.5 q-2.4 4 0 8 M595.2 67.5 q2.4 4 0 8" stroke-width="0.5"/>
  <path d="M609.5 67.2 L614 71.5 L609.5 75.8 L605 71.5 Z" stroke-width="0.75"/>
  <path d="M609.5 69.4 v2.8 M608 70.4 l1.5 1.8 l1.5 -1.8" stroke-width="0.6"/>
 </g>
 <path d="M669.2 70.8 L670.6 68.4 L671.4 70.6 L672.8 67.8 L674.2 70.6 L675 68.4 L676.4 70.8 L676 73.4 L674.4 75.4 L672.8 74.2 L671.2 75.4 L669.6 73.4 Z" fill="none" stroke="#e5564e" stroke-width="0.75"/>
 <path d="M671 71.4 L672.8 73.6 L674.6 71.4" fill="none" stroke="#e5564e" stroke-width="0.55"/>
</svg>
<div class="t" style="left:448.00px;top:68.70px;font-size:5.67px;font-weight:normal;color:#e5453d;transform:scaleX(0.742);transform-origin:0 0;-webkit-text-stroke:0.2px #e5453d;">MODUŁY PV</div>
<div class="t" style="left:556.80px;top:67.79px;font-size:6.40px;font-weight:normal;color:#444;transform:scaleX(0.946);transform-origin:0 0;-webkit-text-stroke:0.12px #444;">PL</div>
<div class="t" style="left:624.70px;top:67.66px;font-size:6.54px;font-weight:bold;color:#333;transform:scaleX(0.876);transform-origin:0 0;-webkit-text-stroke:0.12px #333;">wróć do eProfil</div>
<div class="t" style="left:98.00px;top:96.27px;font-size:5.23px;font-weight:bold;color:#333;transform:scaleX(0.748);transform-origin:0 0;-webkit-text-stroke:0.12px #333;">POLACIE:</div>
<div class="t" style="left:149.40px;top:96.27px;font-size:5.23px;font-weight:bold;color:#333;transform:scaleX(0.756);transform-origin:0 0;-webkit-text-stroke:0.12px #333;">ILOŚĆ: 8</div>
<div class="a" style="left:95.30px;top:103.90px;width:73.50px;height:0.90px;background:#5a5a5a;"></div>
<div class="a" style="left:0;top:0;width:778px;height:378.9px;overflow:hidden">
<div class="a" style="left:95.30px;top:114.30px;width:54.40px;height:54.60px;background:transparent;border:0.9px solid #eb8f8a;box-sizing:border-box"></div>
<div class="t" style="left:98.30px;top:118.66px;font-size:4.65px;font-weight:normal;color:#555;transform:scaleX(1.000);transform-origin:0 0;-webkit-text-stroke:0.12px #555;">1</div>
<div class="t" style="left:124.20px;top:153.49px;font-size:4.51px;font-weight:normal;color:#999;transform:scaleX(1.000);transform-origin:0 0;-webkit-text-stroke:0.12px #999;">S</div>
<div class="t" style="left:105.90px;top:160.57px;font-size:5.23px;font-weight:normal;color:#555;transform:scaleX(0.796);transform-origin:0 0;-webkit-text-stroke:0.12px #555;">33°</div>
<div class="t" style="left:131.60px;top:160.57px;font-size:5.23px;font-weight:normal;color:#555;transform:scaleX(0.815);transform-origin:0 0;-webkit-text-stroke:0.12px #555;">46.5 m<sup style="font-size:60%;vertical-align:top">2</sup></div>
<div class="t" style="left:95.20px;top:172.59px;font-size:5.09px;font-weight:normal;color:#333;transform:scaleX(0.875);transform-origin:0 0;-webkit-text-stroke:0.12px #333;">Moc maksymalna: <b>2.97 kWp</b></div>
<div class="t" style="left:95.20px;top:179.77px;font-size:5.23px;font-weight:normal;color:#444;transform:scaleX(0.855);transform-origin:0 0;-webkit-text-stroke:0.12px #444;">Ilość modułów PV: 18 szt</div>
<div class="a" style="left:95.00px;top:188.90px;width:68.00px;height:0.70px;background:#e6e6e6;"></div>
<div class="a" style="left:153.70px;top:127.80px;width:5.10px;height:1.90px;background:#7a7a7a;"></div>
<div class="a" style="left:95.30px;top:195.40px;width:54.40px;height:54.60px;background:transparent;border:0.9px solid #e4e4e4;box-sizing:border-box"></div>
<div class="t" style="left:98.30px;top:199.76px;font-size:4.65px;font-weight:normal;color:#555;transform:scaleX(1.000);transform-origin:0 0;-webkit-text-stroke:0.12px #555;">2</div>
<div class="t" style="left:124.20px;top:234.59px;font-size:4.51px;font-weight:normal;color:#999;transform:scaleX(1.000);transform-origin:0 0;-webkit-text-stroke:0.12px #999;">N</div>
<div class="t" style="left:105.90px;top:241.67px;font-size:5.23px;font-weight:normal;color:#555;transform:scaleX(0.796);transform-origin:0 0;-webkit-text-stroke:0.12px #555;">32°</div>
<div class="t" style="left:127.00px;top:241.67px;font-size:5.23px;font-weight:normal;color:#555;transform:scaleX(0.917);transform-origin:0 0;-webkit-text-stroke:0.12px #555;">86.52 m<sup style="font-size:60%;vertical-align:top">2</sup></div>
<div class="t" style="left:95.20px;top:253.69px;font-size:5.09px;font-weight:normal;color:#333;transform:scaleX(0.875);transform-origin:0 0;-webkit-text-stroke:0.12px #333;">Moc maksymalna: <b>0 kWp</b></div>
<div class="t" style="left:95.20px;top:260.87px;font-size:5.23px;font-weight:normal;color:#444;transform:scaleX(0.840);transform-origin:0 0;-webkit-text-stroke:0.12px #444;">Ilość modułów PV: 0 szt</div>
<div class="a" style="left:95.00px;top:270.00px;width:68.00px;height:0.70px;background:#e6e6e6;"></div>
<div class="a" style="left:153.70px;top:208.90px;width:5.10px;height:1.90px;background:#7a7a7a;"></div>
<div class="a" style="left:95.30px;top:276.30px;width:54.40px;height:54.60px;background:transparent;border:0.9px solid #e4e4e4;box-sizing:border-box"></div>
<div class="t" style="left:98.30px;top:280.66px;font-size:4.65px;font-weight:normal;color:#555;transform:scaleX(1.000);transform-origin:0 0;-webkit-text-stroke:0.12px #555;">3</div>
<div class="t" style="left:124.20px;top:315.49px;font-size:4.51px;font-weight:normal;color:#999;transform:scaleX(1.000);transform-origin:0 0;-webkit-text-stroke:0.12px #999;">W</div>
<div class="t" style="left:105.90px;top:322.57px;font-size:5.23px;font-weight:normal;color:#555;transform:scaleX(0.796);transform-origin:0 0;-webkit-text-stroke:0.12px #555;">33°</div>
<div class="t" style="left:127.00px;top:322.57px;font-size:5.23px;font-weight:normal;color:#555;transform:scaleX(0.917);transform-origin:0 0;-webkit-text-stroke:0.12px #555;">59.93 m<sup style="font-size:60%;vertical-align:top">2</sup></div>
<div class="t" style="left:95.20px;top:334.59px;font-size:5.09px;font-weight:normal;color:#333;transform:scaleX(0.875);transform-origin:0 0;-webkit-text-stroke:0.12px #333;">Moc maksymalna: <b>0 kWp</b></div>
<div class="t" style="left:95.20px;top:341.77px;font-size:5.23px;font-weight:normal;color:#444;transform:scaleX(0.840);transform-origin:0 0;-webkit-text-stroke:0.12px #444;">Ilość modułów PV: 0 szt</div>
<div class="a" style="left:95.00px;top:350.90px;width:68.00px;height:0.70px;background:#e6e6e6;"></div>
<div class="a" style="left:153.70px;top:289.80px;width:5.10px;height:1.90px;background:#7a7a7a;"></div>
<div class="a" style="left:95.30px;top:357.20px;width:54.40px;height:54.60px;background:transparent;border:0.9px solid #e4e4e4;box-sizing:border-box"></div>
<div class="t" style="left:98.30px;top:361.56px;font-size:4.65px;font-weight:normal;color:#555;transform:scaleX(1.000);transform-origin:0 0;-webkit-text-stroke:0.12px #555;">4</div>
<div class="t" style="left:124.20px;top:396.39px;font-size:4.51px;font-weight:normal;color:#999;transform:scaleX(1.000);transform-origin:0 0;-webkit-text-stroke:0.12px #999;">E</div>
<div class="t" style="left:105.90px;top:403.47px;font-size:5.23px;font-weight:normal;color:#555;transform:scaleX(0.796);transform-origin:0 0;-webkit-text-stroke:0.12px #555;">33°</div>
<div class="t" style="left:127.00px;top:403.47px;font-size:5.23px;font-weight:normal;color:#555;transform:scaleX(1.058);transform-origin:0 0;-webkit-text-stroke:0.12px #555;">40.2 m<sup style="font-size:60%;vertical-align:top">2</sup></div>
<div class="t" style="left:95.20px;top:415.49px;font-size:5.09px;font-weight:normal;color:#333;transform:scaleX(0.875);transform-origin:0 0;-webkit-text-stroke:0.12px #333;">Moc maksymalna: <b>0 kWp</b></div>
<div class="t" style="left:95.20px;top:422.67px;font-size:5.23px;font-weight:normal;color:#444;transform:scaleX(0.840);transform-origin:0 0;-webkit-text-stroke:0.12px #444;">Ilość modułów PV: 0 szt</div>
<div class="a" style="left:95.00px;top:431.80px;width:68.00px;height:0.70px;background:#e6e6e6;"></div>
<div class="a" style="left:153.70px;top:370.70px;width:5.10px;height:1.90px;background:#7a7a7a;"></div>
<svg class="a" style="left:0;top:0" width="778" height="464" viewBox="0 0 778 464"><polygon points="98.7,131.8 146.1,131.8 132.1,145.8 112.7,145.8" fill="#d9d9d9"/><circle cx="119.8" cy="155.7" r="1.9" fill="none" stroke="#999" stroke-width="0.5"/><path d="M119.8 154.6 v1.2 l0.8 0.6" fill="none" stroke="#999" stroke-width="0.4"/><path d="M98.4 165.1 h4.6 M99 165.1 l2.4 -3 M101.6 162.9 q1 0.8 0.8 2.2" fill="none" stroke="#666" stroke-width="0.55"/><path d="M153.4 143.7 l0.5 -1.8 l4.6 -4.6 l1.3 1.3 l-4.6 4.6z M157.6 138.2 l1.3 1.3" fill="none" stroke="#666" stroke-width="0.65"/><path d="M154.4 149.0 v7.2 M158.5 149.0 v7.2 M154.4 149.2 h4.1 M156.45 149.9 v5.8 M155.2 152.6 h2.5" fill="none" stroke="#777" stroke-width="0.55"/><polygon points="105.0,215.2 138.4,215.2 146.4,224.5 98.2,224.5" fill="#d9d9d9"/><circle cx="119.8" cy="236.8" r="1.9" fill="none" stroke="#999" stroke-width="0.5"/><path d="M119.8 235.7 v1.2 l0.8 0.6" fill="none" stroke="#999" stroke-width="0.4"/><path d="M98.4 246.2 h4.6 M99 246.2 l2.4 -3 M101.6 244.0 q1 0.8 0.8 2.2" fill="none" stroke="#666" stroke-width="0.55"/><path d="M153.4 224.8 l0.5 -1.8 l4.6 -4.6 l1.3 1.3 l-4.6 4.6z M157.6 219.3 l1.3 1.3" fill="none" stroke="#666" stroke-width="0.65"/><path d="M154.4 230.1 v7.2 M158.5 230.1 v7.2 M154.4 230.3 h4.1 M156.45 231.0 v5.8 M155.2 233.7 h2.5" fill="none" stroke="#777" stroke-width="0.55"/><polygon points="103.6,294.1 139.8,294.1 145.8,306.2 97.5,306.2" fill="#d9d9d9"/><circle cx="119.8" cy="317.7" r="1.9" fill="none" stroke="#999" stroke-width="0.5"/><path d="M119.8 316.6 v1.2 l0.8 0.6" fill="none" stroke="#999" stroke-width="0.4"/><path d="M98.4 327.1 h4.6 M99 327.1 l2.4 -3 M101.6 324.9 q1 0.8 0.8 2.2" fill="none" stroke="#666" stroke-width="0.55"/><path d="M153.4 305.7 l0.5 -1.8 l4.6 -4.6 l1.3 1.3 l-4.6 4.6z M157.6 300.2 l1.3 1.3" fill="none" stroke="#666" stroke-width="0.65"/><path d="M154.4 311.0 v7.2 M158.5 311.0 v7.2 M154.4 311.2 h4.1 M156.45 311.9 v5.8 M155.2 314.6 h2.5" fill="none" stroke="#777" stroke-width="0.55"/><polygon points="111.6,373.6 146.0,373.6 141.0,378.8 105.6,378.8" fill="#d9d9d9"/><circle cx="119.8" cy="398.6" r="1.9" fill="none" stroke="#999" stroke-width="0.5"/><path d="M119.8 397.5 v1.2 l0.8 0.6" fill="none" stroke="#999" stroke-width="0.4"/><path d="M98.4 408.0 h4.6 M99 408.0 l2.4 -3 M101.6 405.8 q1 0.8 0.8 2.2" fill="none" stroke="#666" stroke-width="0.55"/><path d="M153.4 386.6 l0.5 -1.8 l4.6 -4.6 l1.3 1.3 l-4.6 4.6z M157.6 381.1 l1.3 1.3" fill="none" stroke="#666" stroke-width="0.65"/><path d="M154.4 391.9 v7.2 M158.5 391.9 v7.2 M154.4 392.1 h4.1 M156.45 392.8 v5.8 M155.2 395.5 h2.5" fill="none" stroke="#777" stroke-width="0.55"/></svg>
</div>
<svg class="a" style="left:0;top:0" width="778" height="464" viewBox="0 0 778 464">
 <path d="M168.9 113.4 l1.5 -1.7 l1.5 1.7z" fill="#c8c8c8"/>
 <rect x="168.8" y="116" width="3" height="105.4" rx="1.2" fill="#c6c6c6"/>
 <path d="M168.9 375.4 l1.5 1.7 l1.5 -1.7z" fill="#b8b8b8"/>
</svg>
<div class="a" style="left:92.00px;top:381.60px;width:81.60px;height:0.80px;background:#e8e8e8;"></div>
<div class="a" style="left:173.20px;top:88.00px;width:0.70px;height:316.70px;background:#efefef;"></div>
<div class="a" style="left:96.00px;top:388.20px;width:72.00px;height:12.40px;background:#de2a22;"></div>
<div class="t" style="left:103.60px;top:391.86px;font-size:4.65px;font-weight:bold;color:#fff;transform:scaleX(0.706);transform-origin:0 0;-webkit-text-stroke:0.12px #fff;">PRZEJDŹ DO</div>
<svg class="a" style="left:0;top:0" width="778" height="464" viewBox="0 0 778 464">
 <path d="M132.6 390.6 L136.2 397.6 H129 Z M130.8 394.4 h3.6 M130 396 h5.2 M132.6 390.6 L131.6 397.6 M132.6 390.6 L133.6 397.6" fill="none" stroke="#fff" stroke-width="0.6"/>
</svg>
<div class="t" style="left:139.40px;top:391.86px;font-size:4.65px;font-weight:bold;color:#fff;transform:scaleX(0.736);transform-origin:0 0;-webkit-text-stroke:0.12px #fff;">OFERTA PV</div>
<div class="a" style="left:594.20px;top:93.90px;width:88.80px;height:112.30px;background:#f0f0f0;"></div>
<div class="t" style="left:603.10px;top:102.20px;font-size:5.67px;font-weight:normal;color:#444;transform:scaleX(0.836);transform-origin:0 0;-webkit-text-stroke:0.12px #444;">Ilość modułów PV:</div>
<div class="t" style="left:603.10px;top:110.33px;font-size:4.22px;font-weight:normal;color:#b0b0b0;transform:scaleX(0.975);transform-origin:0 0;-webkit-text-stroke:0.12px #b0b0b0;">Wybierz minimum 12 modułów</div>
<div class="t" style="left:603.10px;top:118.72px;font-size:5.52px;font-weight:normal;color:#444;transform:scaleX(0.870);transform-origin:0 0;-webkit-text-stroke:0.12px #444;"><b>66</b> z 148 szt</div>
<div class="a" style="left:603.00px;top:130.30px;width:71.40px;height:1.40px;background:#dadada;"></div>
<div class="a" style="left:603.00px;top:130.00px;width:31.40px;height:2.00px;background:#e02b24;"></div>
<div class="a" style="left:632.10px;top:128.70px;width:4.60px;height:4.60px;background:#e02b24;border-radius:50%"></div>
<div class="t" style="left:602.90px;top:141.37px;font-size:5.23px;font-weight:normal;color:#444;transform:scaleX(0.776);transform-origin:0 0;-webkit-text-stroke:0.12px #444;">Moc maksymalna:</div>
<div class="a" style="left:603.20px;top:150.50px;width:57.60px;height:10.60px;background:#fff;"></div>
<div class="t" style="left:605.20px;top:153.12px;font-size:5.52px;font-weight:normal;color:#333;transform:scaleX(0.883);transform-origin:0 0;-webkit-text-stroke:0.12px #333;">10.89</div>
<div class="t" style="left:664.00px;top:152.70px;font-size:5.67px;font-weight:normal;color:#e0413a;transform:scaleX(0.926);transform-origin:0 0;-webkit-text-stroke:0.12px #e0413a;">kWp</div>
<svg class="a" style="left:0;top:0" width="778" height="464" viewBox="0 0 778 464">
 <path d="M604 170.2 q-1.6 2.6 0 5.4 M609.2 170.2 q1.6 2.6 0 5.4 M607.2 170.6 l-1.4 2.4 h1.8 l-1.4 2.4" fill="none" stroke="#e0413a" stroke-width="0.6"/>
</svg>
<div class="t" style="left:612.60px;top:170.15px;font-size:5.38px;font-weight:normal;color:#444;transform:scaleX(0.874);transform-origin:0 0;-webkit-text-stroke:0.12px #444;">Szacowana roczna produkcja</div>
<div class="t" style="left:612.60px;top:175.85px;font-size:5.38px;font-weight:normal;color:#444;transform:scaleX(0.878);transform-origin:0 0;-webkit-text-stroke:0.12px #444;">energii: <b>10 864 kWh</b></div>
<div class="a" style="left:602.90px;top:184.40px;width:71.60px;height:13.00px;background:#de2b23;"></div>
<div class="t" style="left:615.00px;top:188.08px;font-size:5.81px;font-weight:normal;color:#fff;transform:scaleX(0.830);transform-origin:0 0;-webkit-text-stroke:0.25px #fff;">POKAŻ SZCZEGÓŁY</div>
<svg class="a" style="left:0;top:0" width="778" height="464" viewBox="0 0 778 464">
 <circle cx="669.4" cy="387.2" r="3.7" fill="none" stroke="#333" stroke-width="0.9"/>
 <path d="M667.8 386.2 L671.2 388.4" stroke="#444" stroke-width="1.1"/>
 <path d="M664.6 378.2 l1.4 0.8 M664.4 379.4 l1.6 0.9 M664.2 380.6 l1.8 1" stroke="#555" stroke-width="0.5"/>
 <path d="M677.4 382 l1.8 1.2 l-1.6 1 l1.8 1.2" fill="none" stroke="#e53935" stroke-width="0.7"/>
 <path d="M659.4 392.6 l2.4 -1.4" stroke="#555" stroke-width="0.9"/>
 <path d="M671.8 396 l2.4 -1.4" stroke="#555" stroke-width="0.9"/>
</svg>
</div>

</body></html>
